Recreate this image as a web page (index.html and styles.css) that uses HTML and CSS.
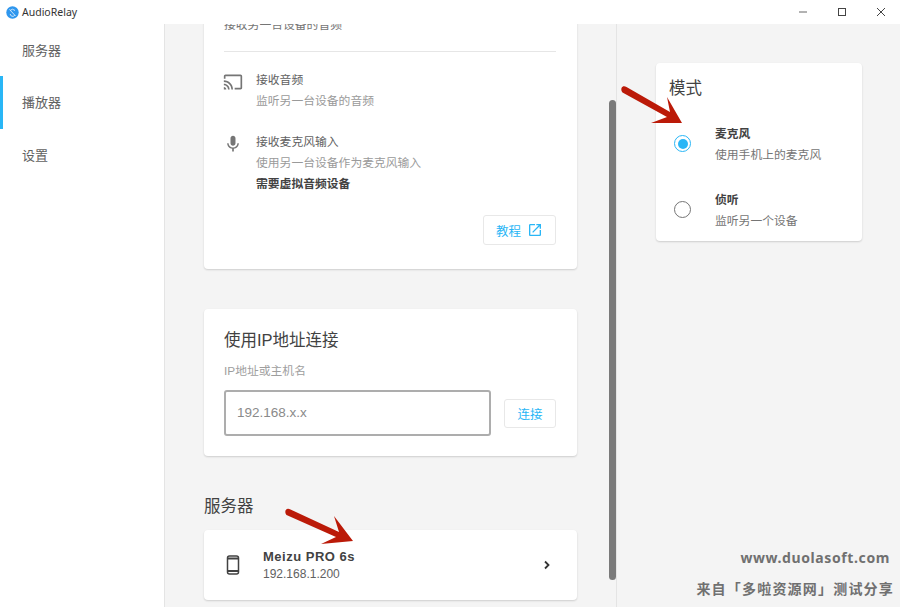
FILE: index.html
```html
<!DOCTYPE html>
<html lang="zh">
<head>
<meta charset="utf-8">
<title>AudioRelay</title>
<link rel="stylesheet" href="styles.css">
</head>
<body>
<div class="app">
  <header class="titlebar">
    <div class="brand">
      <svg class="logo" width="13" height="13" viewBox="0 0 13 13"><circle cx="6.5" cy="6.5" r="6.2" fill="#2f97ee"/><path d="M4 4.500a3.500 3.500 0 0 1 5 0M3.500 3.500l6 6.500M4.200 8a2.500 2.500 0 0 0 4.600 1.200" fill="none" stroke="#cfe6fb" stroke-width="1"/></svg>
      <span class="app-name">AudioRelay</span>
    </div>
    <div class="win-controls">
      <svg width="10" height="10" viewBox="0 0 10 10"><path d="M1 5h8" stroke="#666" stroke-width="1"/></svg>
      <svg width="10" height="10" viewBox="0 0 10 10"><rect x="1.5" y="1.5" width="7" height="7" fill="none" stroke="#444" stroke-width="1"/></svg>
      <svg width="10" height="10" viewBox="0 0 10 10"><path d="M1 1l8 8M9 1l-8 8" stroke="#444" stroke-width="1"/></svg>
    </div>
  </header>
  <div class="body">
    <nav class="sidebar">
      <div class="nav-item">服务器</div>
      <div class="nav-item active">播放器</div>
      <div class="nav-item">设置</div>
    </nav>
    <main class="center">
      <div class="scroller">
        <section class="card intro">
          <div class="intro-top">接收另一台设备的音频</div>
          <div class="divider"></div>
          <div class="feature">
            <svg class="feature-icon" viewBox="0 0 24 24"><path fill="#757575" d="M21 3H3c-1.100 0-2 .9-2 2v3h2V5h18v14h-7v2h7c1.100 0 2-.9 2-2V5c0-1.100-.9-2-2-2zM1 18v3h3c0-1.660-1.340-3-3-3zm0-4v2c2.760 0 5 2.240 5 5h2c0-3.870-3.130-7-7-7zm0-4v2c4.970 0 9 4.030 9 9h2c0-6.080-4.930-11-11-11z"/></svg>
            <div class="feature-text">
              <div class="feature-title">接收音频</div>
              <div class="feature-desc">监听另一台设备的音频</div>
            </div>
          </div>
          <div class="feature second">
            <svg class="feature-icon" viewBox="0 0 24 24"><path fill="#757575" d="M12 14c1.660 0 2.990-1.340 2.990-3L15 5c0-1.660-1.340-3-3-3S9 3.340 9 5v6c0 1.660 1.340 3 3 3zm5.300-3c0 3-2.540 5.100-5.300 5.100S6.700 14 6.700 11H5c0 3.410 2.720 6.230 6 6.720V21h2v-3.280c3.280-.48 6-3.300 6-6.720h-1.700z"/></svg>
            <div class="feature-text">
              <div class="feature-title">接收麦克风输入</div>
              <div class="feature-desc">使用另一台设备作为麦克风输入</div>
              <div class="feature-note">需要虚拟音频设备</div>
            </div>
          </div>
          <div class="intro-actions">
            <button class="btn tutorial">教程
              <svg width="16" height="16" viewBox="0 0 24 24"><path fill="#29b6f6" d="M19 19H5V5h7V3H5c-1.100 0-2 .9-2 2v14c0 1.100.9 2 2 2h14c1.100 0 2-.9 2-2v-7h-2v7zM14 3v2h3.590l-9.830 9.830 1.410 1.410L19 6.410V10h2V3h-7z"/></svg>
            </button>
          </div>
        </section>
        <section class="card ip">
          <h2 class="card-title">使用IP地址连接</h2>
          <div class="field-label">IP地址或主机名</div>
          <div class="ip-row">
            <div class="ip-input">192.168.x.x</div>
            <button class="btn connect">连接</button>
          </div>
        </section>
        <h2 class="section-title">服务器</h2>
        <section class="card server">
          <svg class="phone" width="16" height="20" viewBox="0 0 16 20"><rect x="2.500" y="1" width="11" height="18" rx="2" fill="none" stroke="#424242" stroke-width="1.500"/><path d="M3 3.500h10M3 16h10" stroke="#424242" stroke-width="2"/></svg>
          <div class="server-text">
            <div class="server-name">Meizu PRO 6s</div>
            <div class="server-ip">192.168.1.200</div>
          </div>
          <svg width="16" height="16" viewBox="0 0 16 16"><path d="M6 4.500l3.500 3.500L6 11.500" fill="none" stroke="#333" stroke-width="1.800"/></svg>
        </section>
      </div>
      <div class="scrollbar"></div>
    </main>
    <aside class="right">
      <section class="card mode">
        <h2 class="mode-title">模式</h2>
        <div class="option">
          <span class="radio checked"></span>
          <div>
            <div class="option-title">麦克风</div>
            <div class="option-desc">使用手机上的麦克风</div>
          </div>
        </div>
        <div class="option">
          <span class="radio"></span>
          <div>
            <div class="option-title">侦听</div>
            <div class="option-desc">监听另一个设备</div>
          </div>
        </div>
      </section>
      <div class="watermark">
        <div class="wm-url">www.duolasoft.com</div>
        <div class="wm-text">来自「多啦资源网」测试分享</div>
      </div>
    </aside>
  </div>
  <svg class="arrow arrow-mode" width="70" height="50" viewBox="0 0 70 50"><path fill="#bb1a08" d="M1.500 3C2.500 1 4.500 1 6.500 2L50 27 47 12 62 38 31 38 47 32 2.500 7.500C1.500 6.500 1 4.500 1.500 3z"/></svg>
  <svg class="arrow arrow-server" width="70" height="50" viewBox="0 0 70 50"><path fill="#bb1a08" d="M1.500 3.500C2.500 1.500 4.500 1.500 6.500 2.500L55 25 50 9 69 34 37 37 52 30 2.500 8C1.500 7 1 5 1.500 3.500z"/></svg>
</div>
</body>
</html>
```

FILE: styles.css
```css
* { box-sizing: border-box; }
html, body { margin: 0; height: 100%; overflow: hidden; }
body { font-family: "Liberation Sans", "Noto Sans CJK SC", sans-serif; color: #424242; background: #f4f4f4; }
.app { position: relative; width: 900px; height: 607px; display: flex; flex-direction: column; overflow: hidden; }

.titlebar { height: 24px; flex: none; background: #fff; display: flex; justify-content: space-between; align-items: center; }
.brand { display: flex; align-items: center; gap: 3px; padding-left: 6px; }
.logo { display: block; }
.app-name { font-family: "Noto Sans", sans-serif; font-size: 10.500px; color: #333; }
.win-controls { display: flex; gap: 29px; padding-right: 14px; }
.win-controls svg { display: block; }

.body { flex: 1; display: flex; min-height: 0; }

.sidebar { width: 165px; flex: none; background: #fff; border-right: 1px solid #e4e4e4; }
.nav-item { height: 53px; display: flex; align-items: center; padding: 0 0 2px 22px; font-size: 13px; color: #616161; position: relative; }
.nav-item:first-child { height: 52px; }
.nav-item.active::before { content: ""; position: absolute; left: 0; top: 0; bottom: 0; width: 3px; background: #29b6f6; }

.center { width: 452px; flex: none; position: relative; border-right: 1px solid #e4e4e4; overflow: hidden; }
.scroller { padding: 0 39px; margin-top: -24px; }
.card { background: #fff; border-radius: 4px; box-shadow: 0 1px 2px rgba(0,0,0,.16); }

.intro { width: 373px; height: 269px; padding: 0 21px 0 20px; }
.intro-top { padding-top: 17px; height: 51px; font-size: 11.800px; color: #757575; line-height: 16px; }
.divider { height: 1px; background: #e6e6e6; }
.feature { display: flex; margin-top: 18px; }
.feature.second { margin-top: 20px; }
.feature-icon { flex: none; display: block; width: 20px; height: 20px; margin: 2px 13px 0 -1px; }
.feature-text { font-size: 11.800px; line-height: 21px; }
.feature-title { color: #616161; }
.feature-desc { color: #9a9a9a; }
.feature-note { color: #424242; font-weight: 700; }
.intro-actions { display: flex; justify-content: flex-end; margin-top: 20px; }
.btn { background: #fff; border: 1.500px solid #e8e8e8; border-radius: 3px; color: #29b6f6; font-family: inherit; font-size: 12.500px; padding: 0; display: flex; align-items: center; justify-content: center; }
.tutorial { width: 73px; height: 30px; gap: 6px; }
.connect { width: 52px; height: 29px; }

.ip { width: 373px; height: 147px; margin-top: 40px; padding: 20px 21px 0 20px; }
.card-title { margin: 0; font-size: 16.500px; font-weight: 400; line-height: 22px; color: #424242; }
.field-label { margin-top: 11px; font-size: 11.800px; line-height: 18px; color: #9e9e9e; }
.ip-row { display: flex; align-items: flex-end; justify-content: space-between; margin-top: 10px; }
.ip-input { width: 267px; height: 46px; border: 2px solid #adadad; border-radius: 3px; background: #fff; padding-left: 11px; line-height: 42px; font-size: 13.500px; color: #8a8a8a; }
.ip-row .connect { margin-bottom: 8px; }

.section-title { margin: 38px 0 12px; font-size: 16.500px; font-weight: 400; line-height: 24px; color: #424242; }
.server { width: 373px; height: 70px; display: flex; align-items: center; padding: 0 22px 0 21px; }
.phone { flex: none; }
.server-text { flex: 1; margin-left: 22px; padding-top: 2px; }
.server-name { font-size: 13px; font-weight: 700; letter-spacing: .5px; line-height: 17px; color: #424242; }
.server-ip { font-size: 12px; line-height: 19px; color: #616161; }

.scrollbar { position: absolute; left: 444px; top: 76px; width: 7px; height: 480px; border-radius: 4px; background: #7a7a7a; }

.right { flex: 1; position: relative; padding: 39px 38px 0 39px; }
.mode { height: 178px; padding: 13px 14px 0 13px; width: 206px; }
.mode-title { margin: 0; font-size: 16.500px; font-weight: 400; line-height: 24px; color: #424242; }
.option { display: flex; align-items: flex-start; height: 66px; padding-top: 24px; }
.radio { width: 17px; height: 17px; border: 1.500px solid #757575; border-radius: 50%; flex: none; margin: 11px 24px 0 5px; position: relative; }
.radio.checked { border-color: #29b6f6; }
.radio.checked::after { content: ""; position: absolute; inset: 2.500px; border-radius: 50%; background: #29b6f6; }
.option-title { font-size: 11.800px; font-weight: 700; line-height: 21px; color: #424242; }
.option-desc { font-size: 11.800px; line-height: 21px; color: #757575; }

.watermark { position: absolute; right: 6px; bottom: 9px; text-align: right; font-weight: 700; color: #707070; }
.wm-url { font-family: "Noto Sans", sans-serif; font-size: 14px; letter-spacing: .6px; line-height: 20px; padding-right: 4px; }
.wm-text { font-size: 14px; letter-spacing: 1.200px; margin-top: 12px; line-height: 18px; }

.arrow { position: absolute; display: block; }
.arrow-mode { left: 620px; top: 85px; }
.arrow-server { left: 284px; top: 507px; }
```
